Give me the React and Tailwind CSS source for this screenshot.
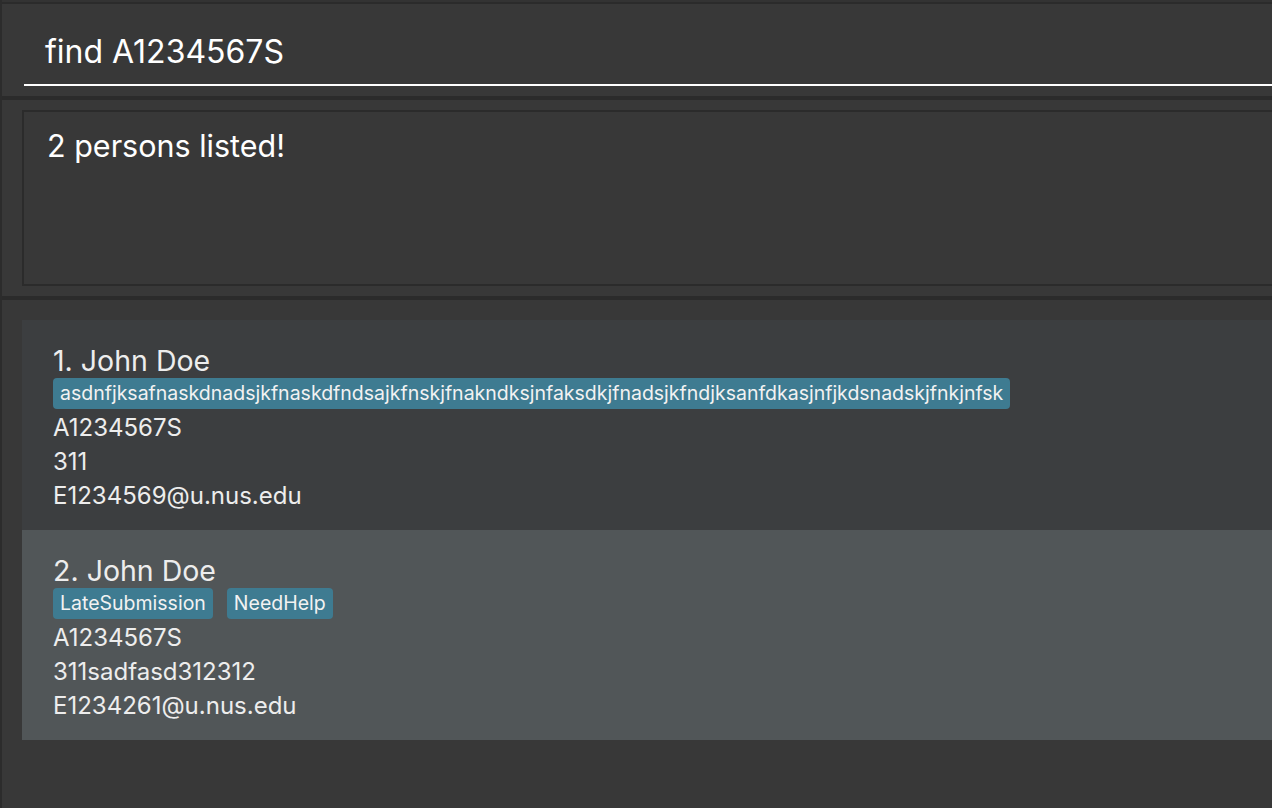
import React from "react";

const people = [
  {
    id: 1,
    name: "John Doe",
    tags: ["asdnfjksafnaskdnadsjkfnaskdfndsajkfnskjfnakndksjnfaksdkjfnadsjkfndjksanfdkasjnfjkdsnadskjfnkjnfsk"],
    matric: "A1234567S",
    phone: "311",
    email: "E1234569@u.nus.edu",
  },
  {
    id: 2,
    name: "John Doe",
    tags: ["LateSubmission", "NeedHelp"],
    matric: "A1234567S",
    phone: "311sadfasd312312",
    email: "E1234261@u.nus.edu",
  },
];

function PersonCard({ person, index }) {
  const bg = index % 2 === 0 ? "bg-[#3c3e40]" : "bg-[#515658]";
  return (
    <div className={`${bg} h-[210px] pl-[31px] pt-[16px] text-[#ededed]`}>
      <div className="text-[28.5px] leading-[50px] h-[42px]">
        {index + 1}. {person.name}
      </div>
      <div className="flex gap-[14px] h-[33px]">
        {person.tags.map((t) => (
          <span key={t} className="bg-[#3e7b91] rounded-[4px] h-[31px] px-[7px] text-[19.5px] leading-[31px] text-[#f2f2f2]">
            {t}
          </span>
        ))}
      </div>
      <div className="text-[24px] leading-[34px]">{person.matric}</div>
      <div className="text-[24px] leading-[34px]">{person.phone}</div>
      <div className="text-[24px] leading-[34px]">{person.email}</div>
    </div>
  );
}

export default function App() {
  return (
    <div
      className="h-[808px] w-full bg-[#383838] overflow-hidden flex flex-col border-l-2 border-[#2c2c2c]"
      style={{ fontFamily: "Inter, 'Noto Sans', sans-serif" }}
    >
      {/* top edge */}
      <div className="h-[4px] border-b-2 border-[#2b2b2b] bg-[#333333]" />

      {/* command box */}
      <div className="h-[92px] pl-[22px] pt-[24px]">
        <div className="border-b-2 border-white h-[58px] pl-[21px] text-white text-[32px] leading-[48px]">
          find A1234567S
        </div>
      </div>

      <div className="h-[4px] bg-[#2b2b2b]" />

      {/* result display */}
      <div className="h-[196px] pl-[20px] pt-[10px]">
        <div className="h-[176px] border-2 border-r-0 border-[#2b2b2b] pl-[23px] pt-[12px] text-white text-[30.5px] leading-[44px]">
          2 persons listed!
        </div>
      </div>

      <div className="h-[4px] bg-[#2b2b2b]" />

      {/* person list */}
      <div className="pl-[20px] pt-[20px] flex flex-col">
        {people.map((p, i) => (
          <PersonCard key={p.id} person={p} index={i} />
        ))}
      </div>
    </div>
  );
}
